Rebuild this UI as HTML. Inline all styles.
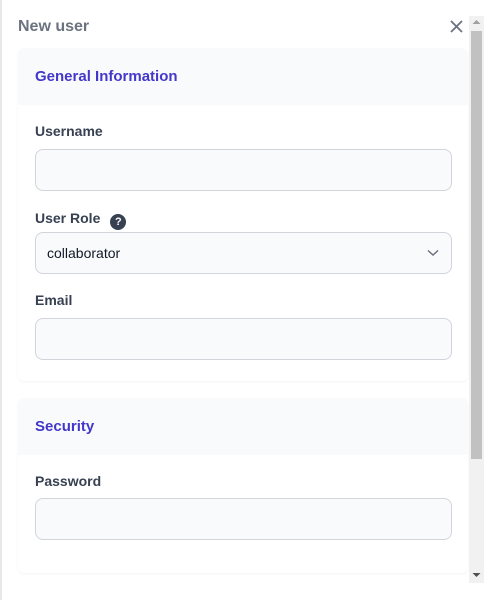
<!DOCTYPE html>
<html><head><style>
*{box-sizing:border-box;margin:0;padding:0}
body{width:500px;height:600px;background:#fff;font-family:"Liberation Sans",sans-serif;position:relative;overflow:hidden}
.lb{position:absolute;left:0;top:0;width:2px;height:600px;background:#e5e7eb}
.t{position:absolute;left:18px;top:18px;font-size:16px;font-weight:bold;color:#6b7280}
.x{position:absolute;left:449px;top:19px}
.sb{position:absolute;left:469px;top:16px;width:15px;height:567px;background:#f1f1f1}
.th{position:absolute;left:471px;top:31px;width:11px;height:428px;background:#c1c1c1}
.card{position:absolute;left:18px;width:450px;background:#fff;border-radius:6px;box-shadow:0 1px 2px rgba(0,0,0,.05)}
.hd{background:#f9fafb;height:57px;border-radius:6px 6px 0 0;padding:20px 17px;font-size:15px;font-weight:bold;color:#4338ca}
.l{position:absolute;left:17px;font-size:14px;font-weight:bold;color:#374151}
.in{position:absolute;left:17px;width:417px;height:42px;border:1px solid #d1d5db;border-radius:8px;background:#f9fafb;font-size:14px;color:#111827;padding:12px 11px}
.q{display:inline-block;width:16px;height:16px;border-radius:50%;background:#374151;color:#fff;font-size:11px;text-align:center;line-height:16px;margin-left:10px;vertical-align:-2px}
</style></head><body>
<div class="lb"></div>
<div class="t">New user</div>
<svg class="x" width="15" height="15" viewBox="0 0 15 15"><path d="M2 2L13 13M13 2L2 13" stroke="#6b7280" stroke-width="1.8"/></svg>
<div class="card" style="top:48px;height:333px">
<div class="hd">General Information</div>
<div class="l" style="top:75px">Username</div>
<div class="in" style="top:101px"></div>
<div class="l" style="top:162px">User Role<span class="q">?</span></div>
<div class="in" style="top:184px">collaborator<svg style="position:absolute;right:12px;top:16px" width="12" height="8" viewBox="0 0 12 8"><path d="M1 1.5L6 6L11 1.5" stroke="#6b7280" stroke-width="1.5" fill="none"/></svg></div>
<div class="l" style="top:244px">Email</div>
<div class="in" style="top:270px"></div>
</div>
<div class="card" style="top:398px;height:175px">
<div class="hd">Security</div>
<div class="l" style="top:75px">Password</div>
<div class="in" style="top:100px"></div>
</div>
<div class="sb"></div><div class="th"></div>
<svg style="position:absolute;left:472px;top:19px" width="9" height="6"><path d="M0.5 5L4.5 1L8.5 5Z" fill="#a0a0a0"/></svg>
<svg style="position:absolute;left:472px;top:572px" width="9" height="6"><path d="M0.5 1L4.5 5L8.5 1Z" fill="#505050"/></svg>
</body></html>
